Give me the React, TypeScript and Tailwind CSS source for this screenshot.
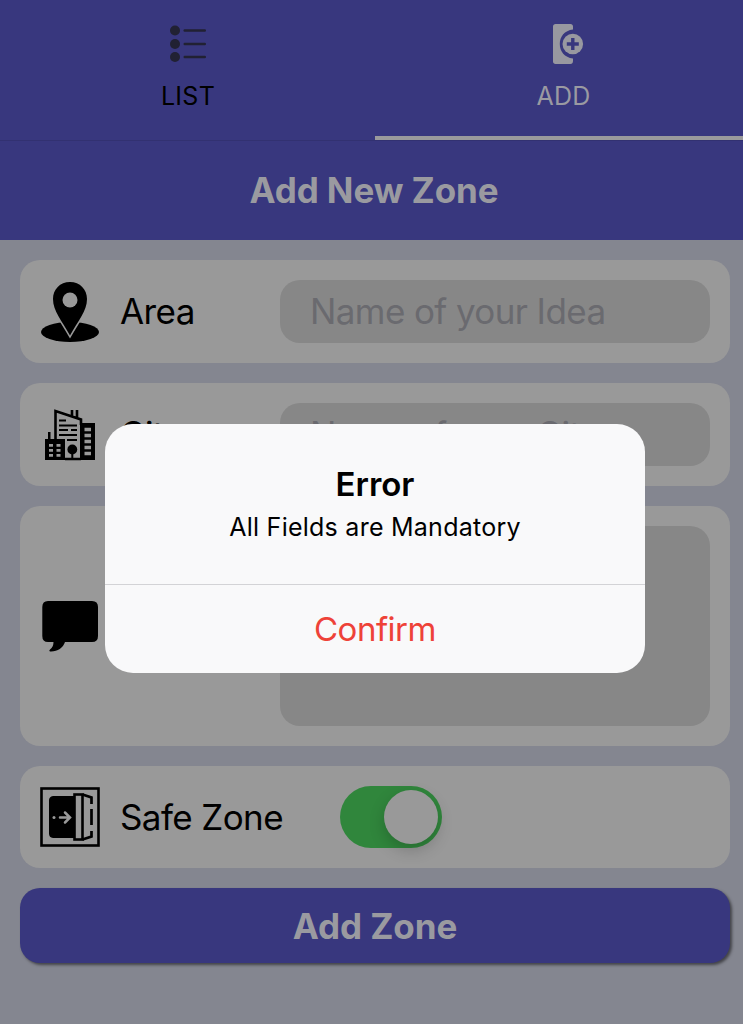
import type { ReactNode } from "react";

function ListIcon() {
  return (
    <svg width="38" height="40" viewBox="0 0 38 40" fill="#212133">
      {[6.5, 20, 33].map((y) => (
        <g key={y}>
          <circle cx="6" cy={y} r="5" />
          <rect x="14.5" y={y - 1.2} width="22.5" height="2.4" rx="1.2" />
        </g>
      ))}
    </svg>
  );
}

function AddIcon() {
  return (
    <svg className="ml-[11px]" width="32" height="42" viewBox="0 0 32 42" fill="#9898a0">
      <path d="M3.5 1H18.5C20 1 21 2 21 3.500V6.500C12.500 7.500 7.800 13.500 7.800 21S12.500 34.500 21 35.500V38C21 40 20 41 18.500 41H3.500C2 41 1 40 1 38.500V3.500C1 2 2 1 3.500 1Z" />
      <circle cx="20.800" cy="21" r="10.300" />
      <path d="M20.800 15V27M14.800 21H26.800" stroke="#38377e" strokeWidth="3.400" fill="none" />
    </svg>
  );
}

function PinIcon() {
  return (
    <svg width="60" height="62" viewBox="0 0 60 62">
      <ellipse cx="30" cy="51" rx="29" ry="10" />
      <path
        d="M30 1C20 1 13 8.500 13 18C13 30 22 40 30 54.500C38 40 47 30 47 18C47 8.500 40 1 30 1Z"
        stroke="#999999"
        strokeWidth="3"
        paintOrder="stroke"
      />
      <circle cx="30" cy="19" r="7.500" fill="#999999" />
    </svg>
  );
}

function CityIcon() {
  return (
    <svg width="60" height="60" viewBox="0 0 60 60">
      <path d="M5 34H8V27H10.500V34H25V55H5ZM40 18H55V55H40Z" />
      <path d="M15.500 34V6L41 14.500V20M32 11V5M37 12.500V5M25 54H41" fill="none" stroke="#000" strokeWidth="2.600" />
      <path d="M19 15.500H26M19 20.500H37M19 25H28M31 25H37M19 30H37M27 35H37" fill="none" stroke="#000" strokeWidth="2.200" />
      <circle cx="32.300" cy="44.500" r="4.900" />
      <path d="M32.300 45V55" stroke="#000" strokeWidth="2" />
      <path
        d="M9 40.300H13M16.500 40.300H20.500M9 45.300H13M16.500 45.300H20.500M9 50.300H13M16.500 50.300H20.500"
        stroke="#999999"
        strokeWidth="2.800"
      />
      <path d="M44.500 24.500H51M44.500 30.500H51M44.500 36.500H51M44.500 42.500H51M44.500 48.500H51" stroke="#999999" strokeWidth="3.500" />
    </svg>
  );
}

function CommentIcon() {
  return (
    <svg width="60" height="60" viewBox="0 0 60 60">
      <path d="M8 5H52Q58 5 58 11V40Q58 46 52 46H25C23 52 17 56 10 55.500Q8.500 55 10 53.500C12.500 51.500 13.500 49 13.500 46H8Q2.300 46 2.300 40V11Q2.300 5 8 5Z" />
    </svg>
  );
}

function DoorIcon() {
  return (
    <svg width="60" height="60" viewBox="0 0 60 60">
      <rect x="1.500" y="1.500" width="57" height="57" fill="none" stroke="#000" strokeWidth="2.600" />
      <path d="M13 9H34V51H13Q9 50.500 9 46.500V13.500Q9 9.500 13 9Z" />
      <rect x="34.500" y="7.500" width="8" height="45" fill="#999999" stroke="#000" strokeWidth="2.600" />
      <path d="M42.500 7.500L51.500 10.500V17M51.500 22V38M51.500 44V49.500L42.500 52.500" fill="none" stroke="#000" strokeWidth="2.700" />
      <path d="M20 30.500H29M25 25.500L30 30.500L25 35.500" fill="none" stroke="#999999" strokeWidth="2.500" strokeLinecap="round" />
      <circle cx="14" cy="30.500" r="1.500" fill="#999999" />
    </svg>
  );
}

function Row({ icon, label, children, height }: { icon: ReactNode; label: string; children: ReactNode; height: string }) {
  return (
    <div className={`flex items-center rounded-[20px] bg-[#999999] px-5 ${height}`}>
      <div className="flex w-[60px] shrink-0 justify-center">{icon}</div>
      <span className="ml-5 w-40 shrink-0 whitespace-nowrap text-[35px] leading-none tracking-[-0.6px]">{label}</span>
      {children}
    </div>
  );
}

function Field({ text, height }: { text: string; height: string }) {
  return (
    <div className={`flex flex-1 items-center rounded-[20px] bg-[#878787] px-[30px] text-[35px] leading-none tracking-[-0.6px] text-[#6a6a6f] ${height}`}>
      {text}
    </div>
  );
}

export default function App() {
  return (
    <div className="relative h-[1024px] w-full overflow-hidden bg-[#848690] font-['Inter',sans-serif] text-black">
      <div className="w-[750px]">
        <nav className="grid h-[141px] grid-cols-2 border-b border-[#323171] bg-[#38377e] text-[25px] leading-none">
          <div className="flex flex-col items-center pt-6">
            <ListIcon />
            <span className="mt-5 pl-px tracking-[0.3px]">LIST</span>
          </div>
          <div className="flex flex-col items-center border-b-4 border-[#9a9a9c] pt-[23px] text-[#9a9aa2]">
            <AddIcon />
            <span className="mt-[19px] pl-0.5 tracking-[0.2px]">ADD</span>
          </div>
        </nav>
        <h1 className="flex h-[99px] items-center justify-center bg-[#38377e] pr-0.5 text-[35px] font-bold tracking-[-0.1px] text-[#9a9aa0]">
          Add New Zone
        </h1>
        <main className="flex flex-col gap-5 p-5">
          <Row icon={<PinIcon />} label="Area" height="h-[103px]">
            <Field text="Name of your Idea" height="h-[63px]" />
          </Row>
          <Row icon={<CityIcon />} label="City" height="h-[103px]">
            <Field text="Name of your City" height="h-[63px]" />
          </Row>
          <Row icon={<CommentIcon />} label="Notes" height="h-[240px]">
            <Field text="" height="h-[200px]" />
          </Row>
          <Row icon={<DoorIcon />} label="Safe Zone" height="h-[102px]">
            <div className="ml-[60px] flex h-[62px] w-[102px] items-center justify-end rounded-full bg-[#30863c] p-1">
              <div className="size-[54px] rounded-full bg-[#999999] shadow-[0_6px_16px_rgba(0,0,0,0.2)]" />
            </div>
          </Row>
          <button className="h-[75px] rounded-[20px] bg-[#38377e] pt-0.5 text-[35px] font-bold tracking-[-0.1px] text-[#9a9aa0] shadow-[2px_2px_3px_rgba(0,0,0,0.5)]">
            Add Zone
          </button>
        </main>
      </div>
      <div role="alertdialog" className="absolute left-[105px] top-[424px] flex h-[249px] w-[540px] flex-col overflow-hidden rounded-[28px] bg-[#f9f9fa] text-center">
        <div className="flex h-[161px] flex-col items-center border-b border-[#d3d3d6] pt-11">
          <h2 className="text-[33px] font-semibold leading-8">Error</h2>
          <p className="mt-3 text-[25px] leading-[30px] tracking-[0.25px]">All Fields are Mandatory</p>
        </div>
        <button className="flex-1 pt-0.5 text-[33px] tracking-[-0.5px] text-[#ee4238]">Confirm</button>
      </div>
    </div>
  );
}
